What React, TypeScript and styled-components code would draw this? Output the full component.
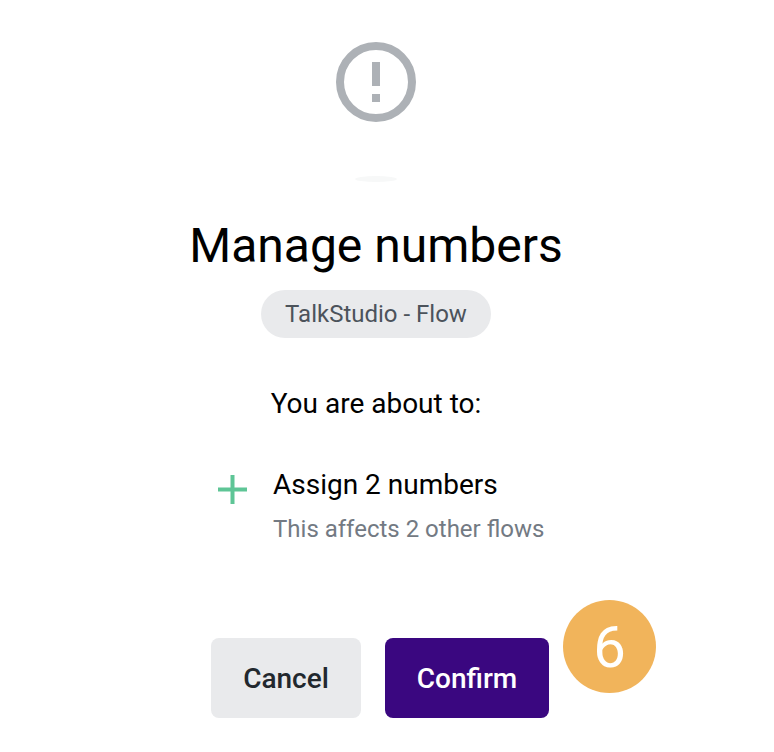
import styled, { createGlobalStyle } from 'styled-components'

const GlobalStyle = createGlobalStyle`
  html, body {
    margin: 0;
    padding: 0;
    background: #fff;
    font-family: Roboto, "Liberation Sans", sans-serif;
  }
`;

const Page = styled.div`
  width: 774px;
  height: 752px;
  overflow: hidden;
  display: flex;
  flex-direction: column;
  align-items: center;
  padding-top: 42px;
  box-sizing: border-box;
  padding-right: 22px;
`;

const WarningIcon = styled.svg`
  width: 80px;
  height: 80px;
  display: block;
  flex-shrink: 0;
`;

const Smudge = styled.div`
  width: 42px;
  height: 6px;
  margin-top: 54px;
  border-radius: 50%;
  background: #f7f8f8;
  flex-shrink: 0;
`;

const Title = styled.h1`
  margin: 32px 0 0;
  font-size: 48px;
  line-height: 64px;
  font-weight: 400;
  color: #000;
`;

const Chip = styled.div`
  margin-top: 12px;
  height: 48px;
  width: 230px;
  flex-shrink: 0;
  border-radius: 24px;
  background: #e9eaec;
  color: #4c535b;
  font-size: 24px;
  display: flex;
  align-items: center;
  justify-content: center;
`;

const Intro = styled.p`
  margin: 46px 0 0;
  font-size: 28px;
  line-height: 40px;
  color: #000;
`;

const ChangeRow = styled.div`
  margin: 41px 0 0 8px;
  width: 326px;
  display: flex;
  gap: 24px;
`;

const PlusIcon = styled.svg`
  width: 32px;
  height: 32px;
  margin-top: 9px;
  flex-shrink: 0;
`;

const ChangeText = styled.div`
  display: flex;
  flex-direction: column;
  white-space: nowrap;
`;

const ChangeTitle = styled.div`
  font-size: 28px;
  line-height: 40px;
  color: #000;
`;

const ChangeNote = styled.div`
  margin-top: 4px;
  font-size: 24px;
  line-height: 40px;
  color: #737a83;
`;

const Actions = styled.div`
  position: relative;
  margin: 89px 0 0 8px;
  display: flex;
  gap: 24px;
  flex-shrink: 0;
`;

const Button = styled.button<{ $primary?: boolean }>`
  height: 80px;
  width: ${(p) => (p.$primary ? '164px' : '150px')};
  border: none;
  border-radius: 8px;
  padding: 0;
  background: ${(p) => (p.$primary ? '#3a0780' : '#e9eaec')};
  color: ${(p) => (p.$primary ? '#fff' : '#22282e')};
  font-family: inherit;
  font-size: 28px;
  font-weight: 500;
`;

const StepBadge = styled.div`
  position: absolute;
  left: 352px;
  top: -38px;
  width: 93px;
  height: 93px;
  border-radius: 50%;
  background: #f1b45b;
  color: #fff;
  font-size: 58px;
  display: flex;
  align-items: center;
  justify-content: center;
`;

const App = () => {
  return (
    <>
      <GlobalStyle />
      <Page>
        <WarningIcon viewBox="0 0 80 80">
          <circle cx="40" cy="40" r="36" fill="none" stroke="#adb1b6" strokeWidth="8" />
          <rect x="36" y="20" width="8" height="24" fill="#adb1b6" />
          <rect x="36" y="52" width="8" height="8" fill="#adb1b6" />
        </WarningIcon>
        <Smudge />
        <Title>Manage numbers</Title>
        <Chip>TalkStudio - Flow</Chip>
        <Intro>You are about to:</Intro>
        <ChangeRow>
          <PlusIcon viewBox="0 0 32 32">
            <rect x="13.5" y="1" width="4" height="29" fill="#5ec596" />
            <rect x="1" y="13.5" width="29" height="4" fill="#5ec596" />
          </PlusIcon>
          <ChangeText>
            <ChangeTitle>Assign 2 numbers</ChangeTitle>
            <ChangeNote>This affects 2 other flows</ChangeNote>
          </ChangeText>
        </ChangeRow>
        <Actions>
          <Button>Cancel</Button>
          <Button $primary>Confirm</Button>
          <StepBadge>6</StepBadge>
        </Actions>
      </Page>
    </>
  )
}

export default App
